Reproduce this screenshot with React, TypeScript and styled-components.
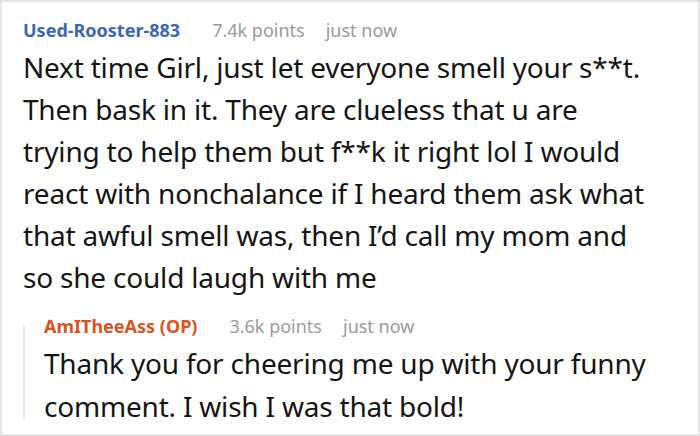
import React from 'react';
import styled, { createGlobalStyle } from 'styled-components';

const GlobalStyle = createGlobalStyle`
    html, body {
        margin: 0;
        padding: 0;
        background: #ffffff;
    }
`;

const Card = styled.div`
    box-sizing: border-box;
    width: 700px;
    height: 436px;
    padding: 16px 0 0 21px;
    border: 2px solid #e3e3e3;
    background: #ffffff;
    font-family: 'Noto Sans', 'Open Sans', sans-serif;
    overflow: hidden;
`;

const Meta = styled.div`
    display: flex;
    align-items: baseline;
    font-size: 18px;
    line-height: 24px;
`;

const Author = styled.span<{ op?: boolean }>`
    margin-right: 32px;
    font-weight: 700;
    color: ${({ op }) => (op ? '#d8531e' : '#3a68b4')};
`;

const Muted = styled.span`
    color: #9a9a9a;

    & + & {
        margin-left: 21px;
    }
`;

const Body = styled.div<{ lineHeight?: number }>`
    margin-top: 4px;
    font-size: 28px;
    line-height: ${({ lineHeight }) => lineHeight ?? 42}px;
    letter-spacing: -0.2px;
    color: #151515;
`;

const Line = styled.span`
    display: block;
    white-space: nowrap;
`;

const Reply = styled.div`
    position: relative;
    margin-top: 16px;
    padding-left: 21px;

    &::before {
        content: '';
        position: absolute;
        left: 0;
        top: 11px;
        bottom: 9px;
        width: 2px;
        background: #e4e4e4;
    }
`;

const App: React.FC = () => (
    <>
        <GlobalStyle />
        <Card>
            <Meta>
                <Author>Used-Rooster-883</Author>
                <Muted>7.4k points</Muted>
                <Muted>just now</Muted>
            </Meta>
            <Body>
                <Line>Next time Girl, just let everyone smell your s**t.</Line>
                <Line>Then bask in it. They are clueless that u are</Line>
                <Line>trying to help them but f**k it right lol I would</Line>
                <Line>react with nonchalance if I heard them ask what</Line>
                <Line>that awful smell was, then I’d call my mom and</Line>
                <Line>so she could laugh with me</Line>
            </Body>
            <Reply>
                <Meta>
                    <Author op>AmITheeAss (OP)</Author>
                    <Muted>3.6k points</Muted>
                    <Muted>just now</Muted>
                </Meta>
                <Body lineHeight={43}>
                    <Line>Thank you for cheering me up with your funny</Line>
                    <Line>comment. I wish I was that bold!</Line>
                </Body>
            </Reply>
        </Card>
    </>
);

export default App;
